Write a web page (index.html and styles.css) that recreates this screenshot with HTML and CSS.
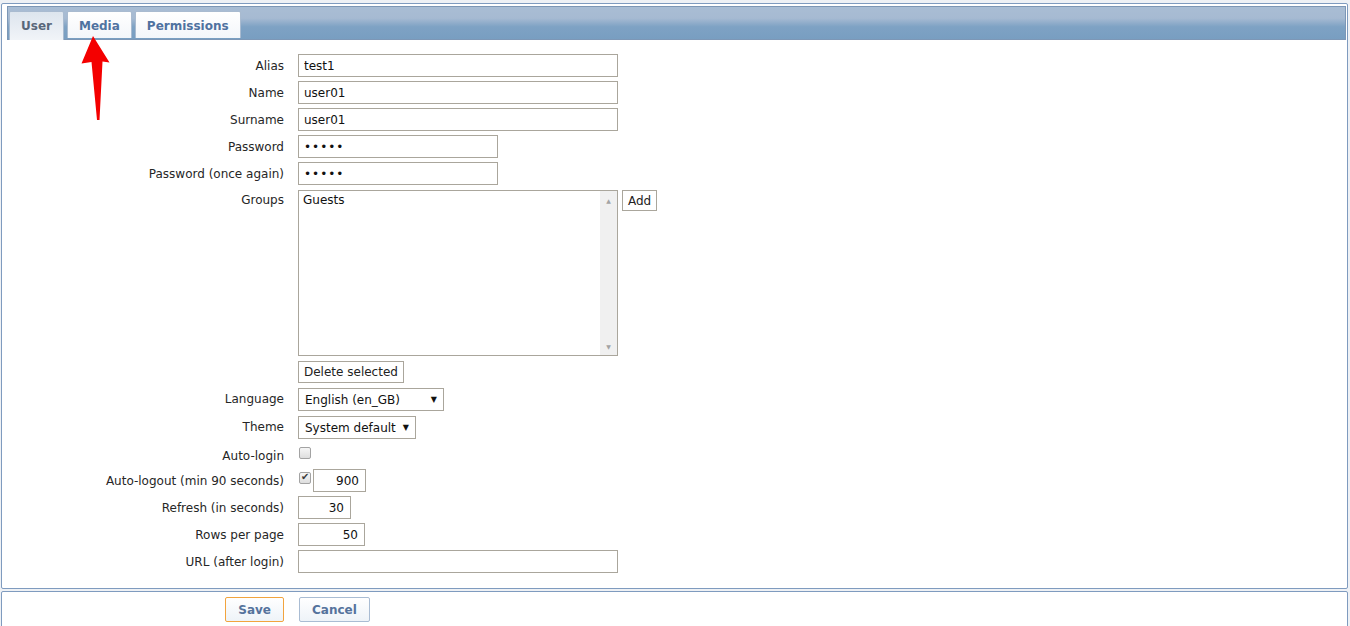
FILE: index.html
```html
<!DOCTYPE html>
<html>

<head>
  <meta charset="utf-8">
  <title>User</title>
  <link rel="stylesheet" href="styles.css">
</head>

<body>
  <div class="box main">
    <div class="tab-bar">
      <a class="tab active">User</a>
      <a class="tab">Media</a>
      <a class="tab">Permissions</a>
    </div>

    <form class="form">
      <label>Alias</label>
      <div><input class="text wide" type="text" value="test1"></div>

      <label>Name</label>
      <div><input class="text wide" type="text" value="user01"></div>

      <label>Surname</label>
      <div><input class="text wide" type="text" value="user01"></div>

      <label>Password</label>
      <div><input class="text mid pass" type="password" value="12345"></div>

      <label>Password (once again)</label>
      <div><input class="text mid pass" type="password" value="12345"></div>

      <label class="top">Groups</label>
      <div class="groups">
        <div class="listbox">
          <div class="list-items">Guests</div>
          <div class="scrollbar">
            <span>&#9650;</span>
            <span>&#9660;</span>
          </div>
        </div>
        <button type="button" class="plain">Add</button>
      </div>

      <span></span>
      <div class="pad1"><button type="button" class="plain">Delete selected</button></div>

      <label>Language</label>
      <div class="pad1">
        <div class="select lang"><span>English (en_GB)</span><span class="caret">&#9660;</span></div>
      </div>

      <label>Theme</label>
      <div class="pad1">
        <div class="select theme"><span>System default</span><span class="caret">&#9660;</span></div>
      </div>

      <label class="low">Auto-login</label>
      <div class="check-row"><input class="check" type="checkbox"></div>

      <label>Auto-logout (min 90 seconds)</label>
      <div class="inline">
        <input class="check" type="checkbox" checked>
        <input class="text num" type="text" value="900">
      </div>

      <label>Refresh (in seconds)</label>
      <div><input class="text num" type="text" value="30"></div>

      <label>Rows per page</label>
      <div><input class="text num rows" type="text" value="50"></div>

      <label>URL (after login)</label>
      <div><input class="text wide" type="text" value=""></div>
    </form>
  </div>

  <div class="box footer">
    <div class="buttons">
      <div class="right"><button type="button" class="btn save">Save</button></div>
      <div><button type="button" class="btn">Cancel</button></div>
    </div>
  </div>

  <!-- annotation arrow pointing at the Media tab -->
  <svg class="arrow" width="40" height="90" viewBox="78 32 40 90">
    <path d="M93,36 L109.5,62.5 L102.5,61.5 L99.5,120 L97,120 L91.5,62 L81.5,63.5 Z" fill="#f40000"/>
  </svg>
</body>

</html>
```

FILE: styles.css
```css
body {
  margin: 0;
  padding: 3px 2px 0 1px;
  background-color: #eef1f5;
  font-family: 'DejaVu Sans', Verdana, sans-serif;
  font-size: 12px;
  color: #262626;
  overflow: hidden;
  position: relative;
}

.box {
  background-color: #fff;
  border: 1px solid #7f9bbf;
  border-radius: 2px;
}

.main {
  height: 584px;
}

.footer {
  margin-top: 2px;
  height: 40px;
}

/* tabs */
.tab-bar {
  display: flex;
  align-items: flex-end;
  height: 32px;
  margin: 2px 1px 0 5px;
  padding-left: 1px;
  border: 1px solid #7d97b6;
  background: linear-gradient(#a9bdd4 0%, #a6bad2 35%, #7ea2c4 62%, #789ec1 100%);
}

.tab {
  display: block;
  height: 26px;
  line-height: 28px;
  padding: 0 11px;
  margin-right: 3px;
  margin-bottom: 1px;
  border: 1px solid #a9bbd0;
  border-bottom: none;
  border-radius: 2px 2px 0 0;
  background: linear-gradient(#ffffff, #f3f6fa);
  font-weight: bold;
  color: #4f72a0;
  cursor: pointer;
}

.tab.active {
  height: 28px;
  margin-bottom: -1px;
  padding: 0 11px;
  background: linear-gradient(#dde5ee, #f1f4f8);
  color: #59677a;
}

/* form */
.form {
  display: grid;
  grid-template-columns: 282px 1fr;
  column-gap: 14px;
  row-gap: 4px;
  padding-top: 14px;
}

.form > label {
  align-self: center;
  text-align: right;
  white-space: nowrap;
}

.form > label.top {
  align-self: start;
  padding-top: 4px;
}

.form > label.low {
  align-self: start;
  padding-top: 6px;
}

.pad1 {
  padding-top: 1px;
}

.text {
  box-sizing: border-box;
  height: 23px;
  padding: 0 5px;
  border: 1px solid #aaa69c;
  font-family: inherit;
  font-size: 12px;
  color: #111;
  outline: none;
  display: block;
}

.wide {
  width: 320px;
}

.mid {
  width: 200px;
}

.pass {
  font-size: 12px;
  letter-spacing: 1px;
}

.num {
  width: 53px;
  text-align: right;
  padding-right: 6px;
}

.num.rows {
  width: 67px;
}

.groups {
  display: flex;
  align-items: flex-start;
  gap: 4px;
  padding-top: 1px;
}

.listbox {
  box-sizing: border-box;
  width: 320px;
  height: 166px;
  border: 1px solid #aaa69c;
  display: flex;
}

.list-items {
  flex: 1;
  padding: 2px 4px;
  color: #111;
}

.scrollbar {
  width: 17px;
  background-color: #f0f0f0;
  display: flex;
  flex-direction: column;
  justify-content: space-between;
  align-items: center;
  font-size: 6px;
  color: #a3a3a3;
  padding: 6px 0 5px;
}

.plain {
  box-sizing: border-box;
  height: 21px;
  padding: 0 5px;
  border: 1px solid #aaa69c;
  background-color: #fff;
  font-family: inherit;
  font-size: 12px;
  color: #222;
}

.pad1 .plain {
  height: 22px;
}

.select {
  box-sizing: border-box;
  height: 23px;
  border: 1px solid #aaa69c;
  display: flex;
  align-items: center;
  justify-content: space-between;
  padding: 0 6px;
  color: #111;
}

.select.lang {
  width: 146px;
}

.select.theme {
  width: 118px;
}

.caret {
  font-size: 8px;
  color: #111;
}

.check {
  appearance: none;
  -webkit-appearance: none;
  width: 12px;
  height: 12px;
  margin: 0;
  border: 1px solid #a3a3a3;
  border-radius: 2px;
  background: linear-gradient(#f6f6f6, #dedede);
  position: relative;
}

.check:checked::after {
  content: '\2714';
  position: absolute;
  left: 1px;
  top: -2px;
  font-size: 10px;
  color: #3a3a3a;
}

.check-row {
  height: 22px;
  padding-top: 4px;
  padding-left: 1px;
  box-sizing: border-box;
}

.inline {
  display: flex;
  align-items: flex-start;
  gap: 2px;
}

.inline .check {
  margin: 3px 0 0 1px;
}

/* footer buttons */
.buttons {
  display: grid;
  grid-template-columns: 282px 1fr;
  column-gap: 15px;
  padding-top: 5px;
}

.right {
  text-align: right;
}

.btn {
  height: 25px;
  padding: 0 12px;
  border: 1px solid #a9bcd3;
  border-radius: 2px;
  background: linear-gradient(#ffffff, #eef3f8);
  font-family: inherit;
  font-size: 12px;
  font-weight: bold;
  color: #55739c;
}

.btn.save {
  border-color: #f2a43e;
  padding: 0 12px;
}

.arrow {
  position: absolute;
  left: 78px;
  top: 32px;
}
```
